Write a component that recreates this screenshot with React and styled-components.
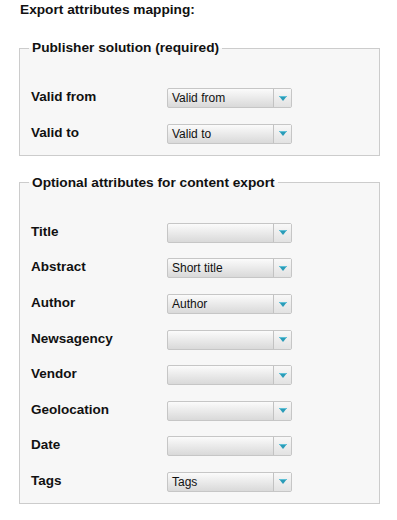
import React from "react";
import styled, { createGlobalStyle } from "styled-components";

const Global = createGlobalStyle`
  html, body { margin: 0; padding: 0; background: #ffffff; }
  body { font-family: "Liberation Sans", Arial, sans-serif; color: #111; }
`;

const Page = styled.div`
  padding: 0 17px 0 19px;
  width: 361px;
`;

const Heading = styled.div`
  font-weight: bold;
  font-size: 13.7px;
  line-height: 20px;
  padding-left: 1px;
`;

const Group = styled.fieldset`
  margin: ${(p) => p.$mt}px 0 0 0;
  padding: 24.5px 11px 3px 11px;
  border: 1px solid #cccccc;
  background: #f7f7f7;
  min-width: 0;
`;

const Legend = styled.legend`
  font-weight: bold;
  font-size: 13.7px;
  line-height: 16px;
  padding: 0 3px;
  margin-left: -2px;
`;

const Row = styled.div`
  display: grid;
  grid-template-columns: 136px 125px;
  align-items: center;
  height: 35.57px;
`;

const Label = styled.div`
  font-weight: bold;
  font-size: 13.5px;
  margin-top: -3px;
`;

const Select = styled.div`
  box-sizing: border-box;
  height: 20px;
  border: 1px solid #c6c6c6;
  border-radius: 2px;
  background: linear-gradient(#fbfbfb, #d9d9d9);
  display: flex;
  align-items: stretch;
`;

const Value = styled.div`
  flex: 1;
  font-size: 12px;
  line-height: 18px;
  padding-left: 4px;
  color: #111;
  white-space: nowrap;
  overflow: hidden;
`;

const Arrow = styled.div`
  width: 17px;
  border-left: 1px solid #c2c2c2;
  display: flex;
  align-items: center;
  justify-content: center;
  background: linear-gradient(#f8f8f8, #e2e2e2);
`;

const Caret = () => (
  <svg width="8" height="5" viewBox="0 0 8 5">
    <path d="M0 0h8L4 5z" fill="#2a9cb8" />
    <path d="M0 0h8v1H0z" fill="#5fc0d6" />
  </svg>
);

const Field = ({ label, value }) => (
  <Row>
    <Label>{label}</Label>
    <Select>
      <Value>{value}</Value>
      <Arrow>
        <Caret />
      </Arrow>
    </Select>
  </Row>
);

export default function App() {
  return (
    <>
      <Global />
      <Page>
        <Heading>Export attributes mapping:</Heading>
        <Group $mt={20}>
          <Legend>Publisher solution (required)</Legend>
          <Field label="Valid from" value="Valid from" />
          <Field label="Valid to" value="Valid to" />
        </Group>
        <Group $mt={19}>
          <Legend>Optional attributes for content export</Legend>
          <Field label="Title" value="" />
          <Field label="Abstract" value="Short title" />
          <Field label="Author" value="Author" />
          <Field label="Newsagency" value="" />
          <Field label="Vendor" value="" />
          <Field label="Geolocation" value="" />
          <Field label="Date" value="" />
          <Field label="Tags" value="Tags" />
        </Group>
      </Page>
    </>
  );
}
